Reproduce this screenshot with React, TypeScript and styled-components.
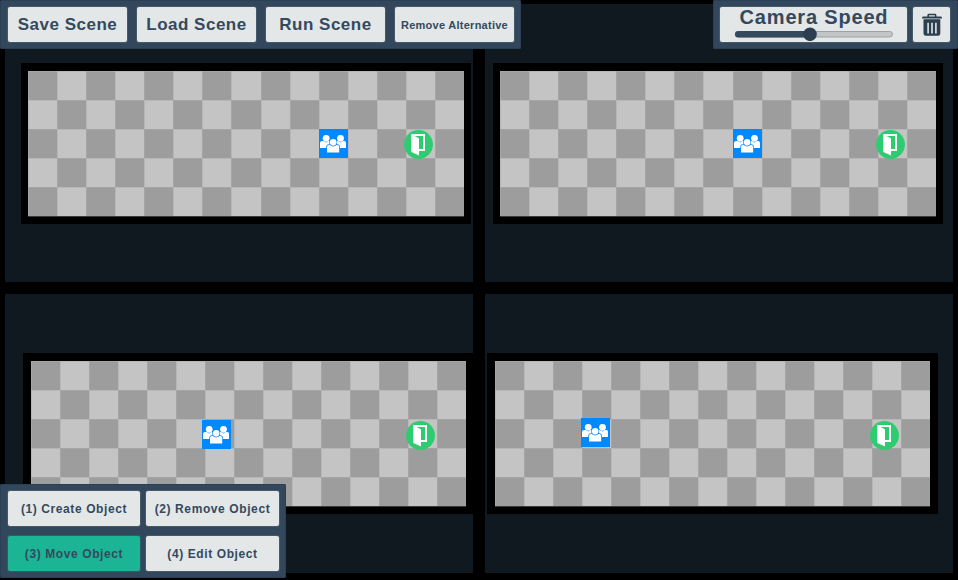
import React from "react";
import styled, { createGlobalStyle } from "styled-components";

const GlobalStyle = createGlobalStyle`
  *, *::before, *::after { box-sizing: border-box; }
  body {
    margin: 0;
    background: #000;
    font-family: "Liberation Sans", Arial, sans-serif;
    font-weight: 700;
    color: #34495e;
    overflow: hidden;
  }
`;

const Screen = styled.main`
  position: relative;
  width: 958px;
  height: 580px;
  overflow: hidden;
  background: #000;
`;

const Views = styled.div`
  display: grid;
  grid-template-columns: 468px 468px;
  grid-template-rows: 278px 279px;
  gap: 12px;
  padding: 4px 5px;
`;

const View = styled.section<{ $top: number; $left: number }>`
  overflow: hidden;
  background: #10191f;
  padding: ${(p) => p.$top}px 0 0 ${(p) => p.$left}px;
`;

const Board = styled.div<{ $edge: number; $side: number; $width: number }>`
  position: relative;
  width: ${(p) => p.$width + 2 * p.$side}px;
  border: solid #000;
  border-width: ${(p) => p.$edge}px ${(p) => p.$side}px;
`;

const Tiles = styled.div<{ $width: number }>`
  display: grid;
  grid-template-columns: repeat(15, 1fr);
  grid-template-rows: repeat(5, 29px);
  width: ${(p) => p.$width}px;
  box-shadow: 0 1px #3b3b3b;
`;

const Tile = styled.i`
  background: #c4c4c4;
  box-shadow: inset 1px 1px #b7b7b7;

  &:nth-child(odd) {
    background: #9d9d9d;
    box-shadow: inset 1px 1px #a5a5a5;
  }
`;

const Piece = styled.svg<{ $x: number; $y: number }>`
  position: absolute;
  left: ${(p) => p.$x}px;
  top: ${(p) => p.$y}px;
  width: 29px;
  height: 29px;
`;

const Toolbar = styled.nav<{ $corner: "topLeft" | "topRight" | "bottomLeft" }>`
  position: absolute;
  background: #32475b;
  border-radius: 2px;
  box-shadow: inset 0 0 0 1px #2c4054;
  ${(p) =>
    ({
      topLeft: "top: 0; left: 0; width: 521px; height: 49px; display: flex; gap: 10px; padding: 7px 0 0 8px;",
      topRight: "top: 0; left: 713px; width: 245px; height: 49px; display: flex; gap: 6px; padding: 7px 0 0 7px;",
      bottomLeft:
        "top: 484px; left: 0; width: 286px; height: 94px; display: grid; grid-template-columns: 132px 133px; grid-template-rows: 35px 35px; gap: 10px 6px; padding: 7px 0 0 8px;",
    })[p.$corner]}
`;

const Button = styled.button<{ $size: number; $spacing: number; $active?: boolean; $width?: number }>`
  display: flex;
  align-items: center;
  justify-content: center;
  width: ${(p) => (p.$width ? `${p.$width}px` : "100%")};
  height: 35px;
  padding: 0;
  border: 0;
  border-radius: 2px;
  background: ${(p) => (p.$active ? "#1bb595" : "#e3e7e7")};
  box-shadow: 0 0 0 1px ${(p) => (p.$active ? "#2b5e68" : "#465968")};
  color: #34495e;
  font: 700 ${(p) => p.$size}px "Liberation Sans", Arial, sans-serif;
  letter-spacing: ${(p) => p.$spacing}px;
  white-space: nowrap;
`;

const SpeedPanel = styled.div`
  display: flex;
  flex-direction: column;
  align-items: center;
  width: 187px;
  height: 35px;
  border-radius: 2px;
  background: #e3e7e7;
  box-shadow: 0 0 0 1px #465968;
`;

const SpeedLabel = styled.span`
  height: 20px;
  padding-left: 1px;
  font-size: 20px;
  line-height: 21px;
  letter-spacing: 0.82px;
  white-space: nowrap;
`;

const Slider = styled.svg`
  width: 160px;
  height: 14px;
`;

const TrashIcon = styled.svg`
  width: 20px;
  height: 24px;
`;

const Crowd = ({ x, y }: { x: number; y: number }) => (
  <Piece $x={x} $y={y} viewBox="0 0 29 29">
    <rect width="29" height="29" fill="#0088ff" />
    <g fill="#fff">
      <circle cx="7.2" cy="9.3" r="3.4" />
      <circle cx="21.5" cy="9.3" r="3.4" />
      <path d="M1 19V14Q1 12 3 12H4.5L7.2 13.4L9.5 12H11V19Z" />
      <path d="M27 19V14Q27 12 25.5 12H24L21.5 13.4L19 12H17.5V19Z" />
    </g>
    <g fill="#fff" stroke="#0088ff" strokeWidth="1.4" paintOrder="stroke">
      <path d="M8 23.4V18Q8 16 10 16H12L14.2 17.2L16.5 16H18.3Q20.2 16 20.2 18V23.4Z" />
      <circle cx="14.2" cy="13.3" r="3.3" />
    </g>
    <path d="M10 16.2H18.3V19H10Z" fill="#fff" />
    <path d="M11.2 16.1Q14.2 18.3 17.2 16.1" fill="none" stroke="#0088ff" strokeWidth=".7" />
  </Piece>
);

const Exit = ({ x, y }: { x: number; y: number }) => (
  <Piece $x={x} $y={y} viewBox="0 0 29 29">
    <circle cx="14.5" cy="14.5" r="14.4" fill="#2ecc71" />
    <path fill="#fff" fillRule="evenodd" d="M7.3 4.1H21V21H15V25.4L13 24.6L7.3 22ZM10.5 6H19V19H15V8.6Q14.4 7.6 10.5 6Z" />
  </Piece>
);

type Scene = {
  top: number; left: number; edge: number; side: number; width: number;
  crowd: [number, number]; exit: [number, number];
};

const scenes: Scene[] = [
  { top: 59, left: 16, edge: 8, side: 7, width: 436, crowd: [291, 58], exit: [376, 59] },
  { top: 59, left: 8, edge: 8, side: 7, width: 436, crowd: [233, 58], exit: [375.5, 59] },
  { top: 59, left: 18, edge: 8, side: 8, width: 435, crowd: [171, 59], exit: [375, 60] },
  { top: 59, left: 2, edge: 8, side: 8, width: 435, crowd: [86, 57], exit: [375, 60] },
];

const tiles = Array.from({ length: 75 }, (_, i) => i);

export default function App() {
  return (
    <Screen>
      <GlobalStyle />
      <Views>
        {scenes.map((s, i) => (
          <View key={i} $top={s.top} $left={s.left}>
            <Board $edge={s.edge} $side={s.side} $width={s.width}>
              <Tiles $width={s.width}>
                {tiles.map((t) => (
                  <Tile key={t} />
                ))}
              </Tiles>
              <Crowd x={s.crowd[0]} y={s.crowd[1]} />
              <Exit x={s.exit[0]} y={s.exit[1]} />
            </Board>
          </View>
        ))}
      </Views>

      <Toolbar $corner="topLeft">
        <Button $width={119} $size={17} $spacing={0.5}>Save Scene</Button>
        <Button $width={119} $size={17} $spacing={0.5}>Load Scene</Button>
        <Button $width={119} $size={17} $spacing={0.5}>Run Scene</Button>
        <Button $width={119} $size={11} $spacing={0.26}>Remove Alternative</Button>
      </Toolbar>

      <Toolbar $corner="topRight">
        <SpeedPanel>
          <SpeedLabel>Camera Speed</SpeedLabel>
          <Slider viewBox="0 0 160 14">
            <rect x="1.5" y="4.5" width="157" height="5.5" rx="2.75" fill="#c2c6c7" stroke="#9da2a4" />
            <rect x="1" y="4" width="76" height="6.5" rx="3.2" fill="#34495e" />
            <circle cx="76" cy="7.3" r="6.8" fill="#2c3e50" />
          </Slider>
        </SpeedPanel>
        <Button $width={37} $size={12} $spacing={0} aria-label="Delete">
          <TrashIcon viewBox="0 0 20 24">
            <g fill="#2c3e50">
              <path fillRule="evenodd" d="M5.4 3.6V2.2Q5.4 .8 6.8 .8H13Q14.4 .8 14.4 2.2V3.6H19Q20 3.6 20 5.4H0Q0 3.6 1 3.6ZM7 3.6H12.8V2.3H7Z" />
              <path fillRule="evenodd" d="M1.5 6.2H18.3V20.5Q18.3 22.7 16 22.7H4Q1.5 22.7 1.5 20.5ZM5.3 9.7V20.5H6.9V9.7ZM9.2 9.7V20.5H10.8V9.7ZM13.1 9.7V20.5H14.7V9.7Z" />
            </g>
          </TrashIcon>
        </Button>
      </Toolbar>

      <Toolbar $corner="bottomLeft">
        <Button $size={12} $spacing={0.6}>(1) Create Object</Button>
        <Button $size={12} $spacing={0.6}>(2) Remove Object</Button>
        <Button $size={12} $spacing={0.6} $active>(3) Move Object</Button>
        <Button $size={12} $spacing={0.6}>(4) Edit Object</Button>
      </Toolbar>
    </Screen>
  );
}
